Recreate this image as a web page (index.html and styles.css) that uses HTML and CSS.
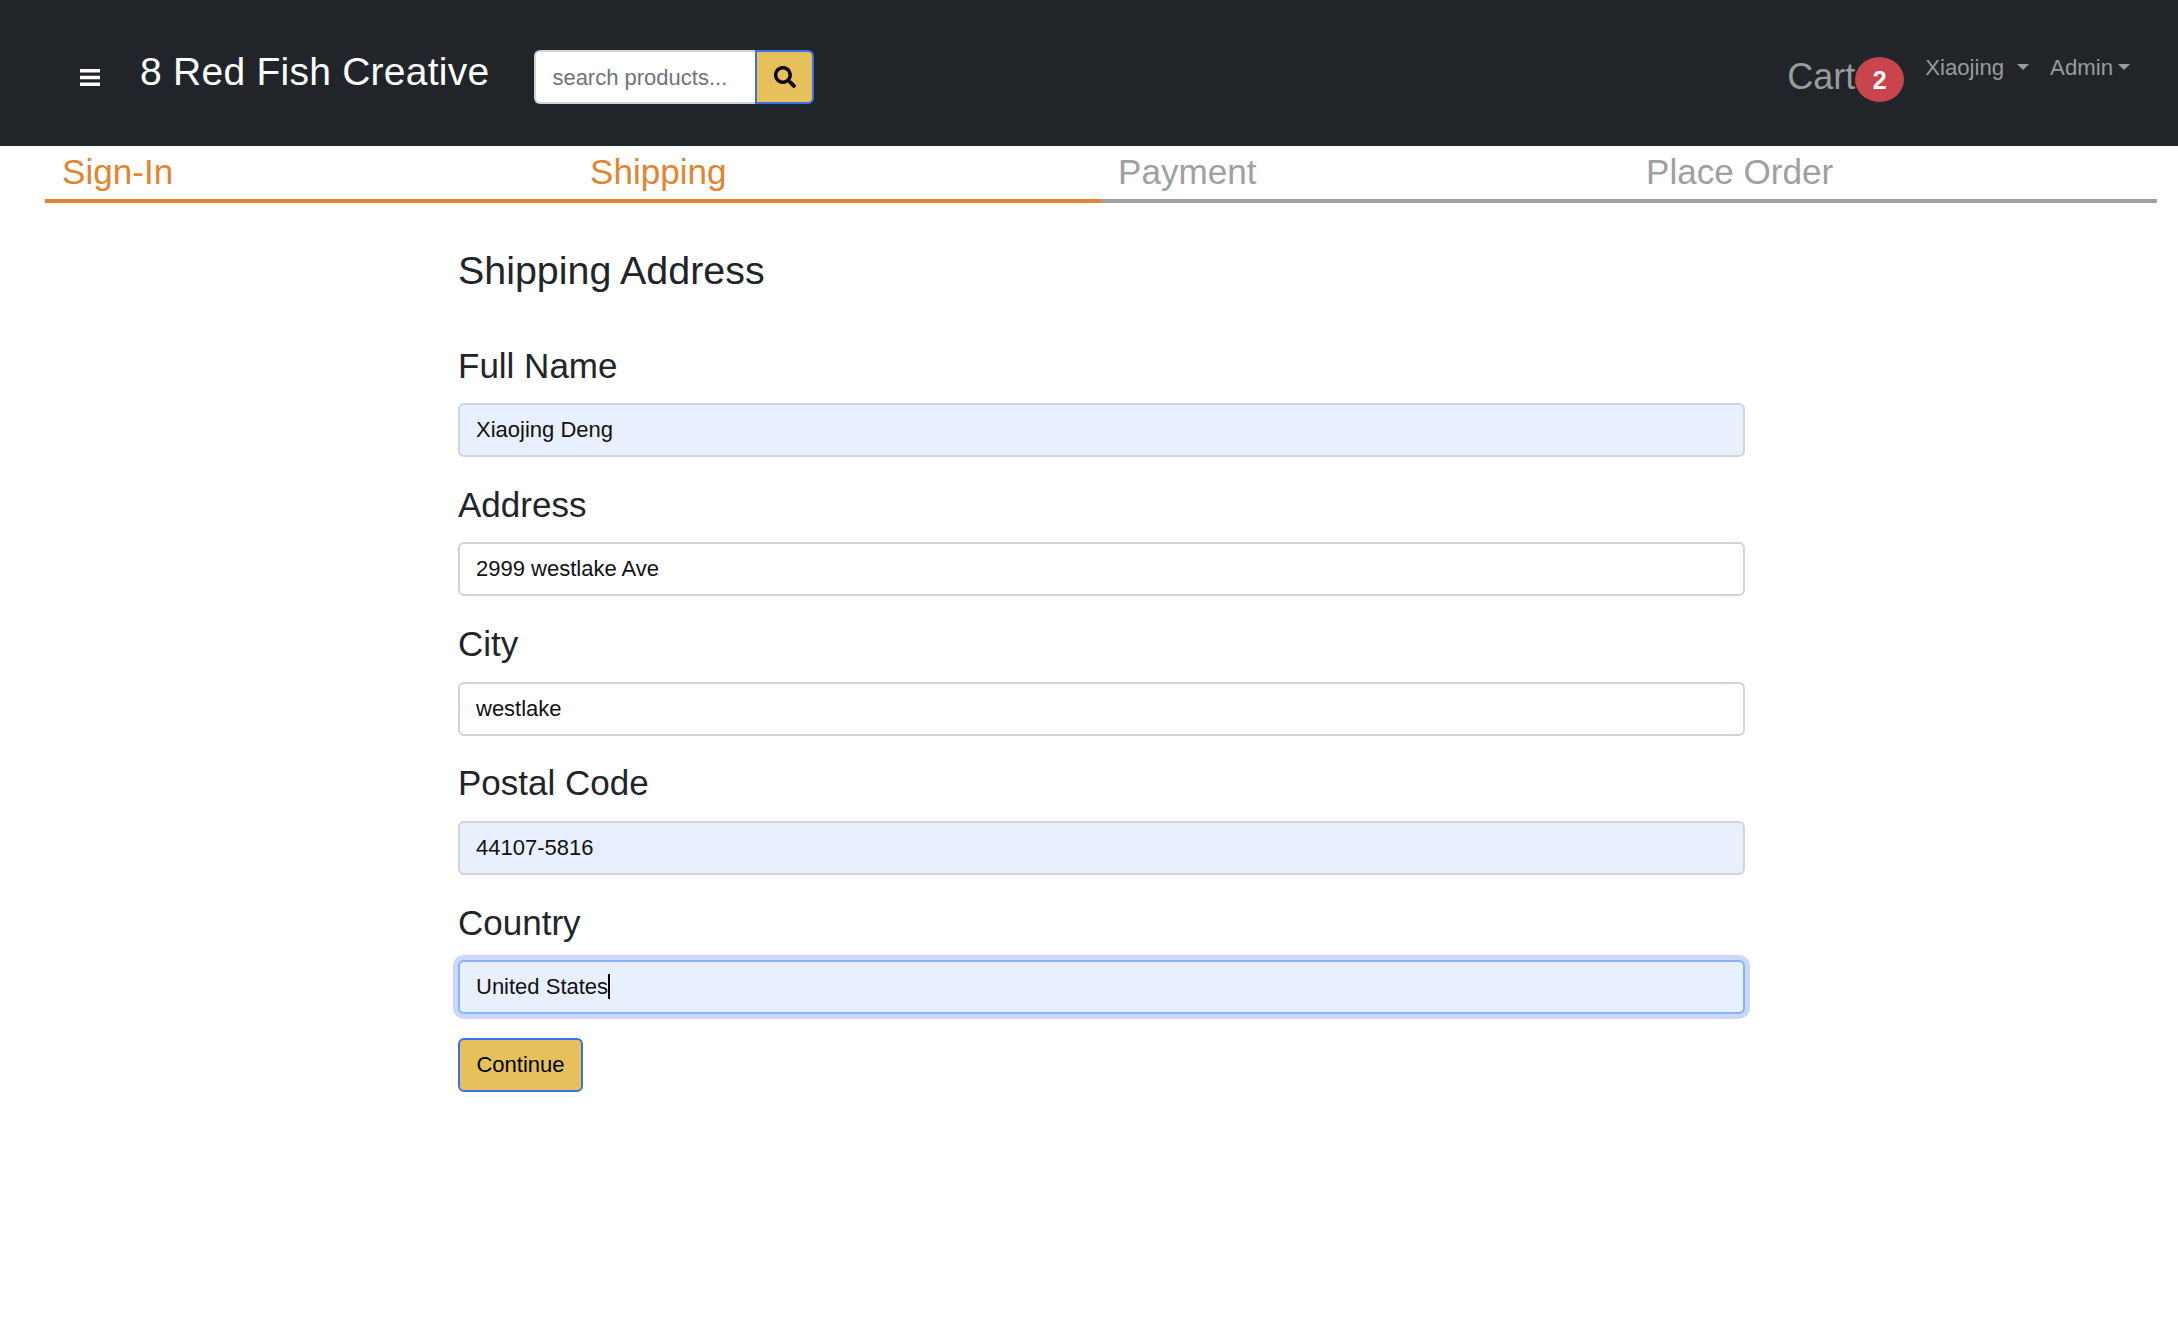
FILE: index.html
```html
<!DOCTYPE html>
<html lang="en">
<head>
  <meta charset="UTF-8">
  <meta name="viewport" content="width=device-width, initial-scale=1.0">
  <title>Shipping Address</title>
  <link rel="stylesheet" href="styles.css">
</head>
<body>
  <!-- top bar -->
  <header class="navbar">
    <div class="nav-left">
      <button class="menu-btn" type="button" aria-label="menu">
        <svg viewBox="0 0 20 17" width="20" height="17"><path d="M0 0h20v3.400H0zM0 6.800h20v3.400H0zM0 13.600h20V17H0z" fill="#fff"/></svg>
      </button>
      <a class="brand" href="#">8 Red Fish Creative</a>
      <form class="search">
        <input class="search-input" type="text" placeholder="search products...">
        <button class="search-btn" type="button" aria-label="search">
          <svg viewBox="0 0 512 512" width="22" height="22"><path d="M505 442.700L405.300 343c-4.500-4.500-10.600-7-17-7H372c27.600-35.300 44-79.700 44-128C416 93.100 322.900 0 208 0S0 93.100 0 208s93.100 208 208 208c48.300 0 92.700-16.400 128-44v16.300c0 6.400 2.500 12.500 7 17l99.700 99.700c9.400 9.400 24.600 9.400 33.900 0l28.300-28.300c9.400-9.400 9.400-24.600.1-34zM208 336c-70.700 0-128-57.200-128-128 0-70.700 57.200-128 128-128 70.700 0 128 57.200 128 128 0 70.700-57.200 128-128 128z" fill="#000"/></svg>
        </button>
      </form>
    </div>
    <nav class="nav-right">
      <a class="cart" href="#">Cart<span class="badge">2</span></a>
      <a class="nav-link user-link" href="#">Xiaojing<span class="caret"></span></a>
      <a class="nav-link admin-link" href="#">Admin<span class="caret"></span></a>
    </nav>
  </header>

  <!-- checkout steps -->
  <div class="steps">
    <div class="step active">Sign-In</div>
    <div class="step active">Shipping</div>
    <div class="step">Payment</div>
    <div class="step">Place Order</div>
  </div>

  <main class="shipping">
    <h1 class="title">Shipping Address</h1>
    <form class="shipping-form">
      <div class="field">
        <label for="fullName">Full Name</label>
        <input id="fullName" class="filled" type="text" value="Xiaojing Deng">
      </div>
      <div class="field">
        <label for="address">Address</label>
        <input id="address" type="text" value="2999 westlake Ave">
      </div>
      <div class="field">
        <label for="city">City</label>
        <input id="city" type="text" value="westlake">
      </div>
      <div class="field">
        <label for="postalCode">Postal Code</label>
        <input id="postalCode" class="filled" type="text" value="44107-5816">
      </div>
      <div class="field field-last">
        <label for="country">Country</label>
        <div class="input-wrap">
          <input id="country" class="filled focused" type="text" value="United States">
          <span class="text-caret"></span>
        </div>
      </div>
      <button class="continue" type="button">Continue</button>
    </form>
  </main>
</body>
</html>
```

FILE: styles.css
```css
/* page */
* {
  box-sizing: border-box;
}
body {
  margin: 0;
  min-height: 1330px;
  background-color: #fff;
  color: #212529;
  font-family: "Liberation Sans", Arial, sans-serif;
  font-size: 22px;
}
a {
  text-decoration: none;
}

/* top bar */
.navbar {
  display: flex;
  justify-content: space-between;
  height: 146px;
  padding: 0 47px 0 80px;
  background-color: #212529;
}
.nav-left {
  display: flex;
  align-items: center;
}
.menu-btn {
  display: flex;
  padding: 0;
  margin-top: 8px;
  border: 0;
  background: none;
}
.brand {
  margin-left: 40px;
  margin-top: -2px;
  color: #fff;
  font-size: 39px;
  letter-spacing: 0.25px;
}
.search {
  display: flex;
  height: 54px;
  margin-left: 45px;
  margin-top: 7px;
}
.search-input {
  width: 221px;
  padding: 2px 16px 0;
  border: 2px solid #ced4da;
  border-right: 0;
  border-radius: 6px 0 0 6px;
  background-color: #fff;
  font: 22px "Liberation Sans", Arial, sans-serif;
  outline: none;
}
.search-input::placeholder {
  color: #6c757d;
}
.search-btn {
  display: flex;
  align-items: center;
  justify-content: center;
  width: 59px;
  padding: 0;
  border: 2px solid #3b71e8;
  border-radius: 0 6px 6px 0;
  background-color: #e6c05a;
}
.nav-right {
  display: flex;
  align-items: flex-start;
}
.cart {
  display: flex;
  margin-top: 57px;
  color: #9a9b9d;
  font-size: 36px;
  line-height: 40px;
}
.badge {
  width: 49px;
  height: 45px;
  border-radius: 50%;
  background-color: #c9444d;
  color: #fff;
  font-size: 25px;
  font-weight: bold;
  line-height: 46px;
  text-align: center;
}
.nav-link {
  display: flex;
  align-items: center;
  margin-top: 55px;
  color: #9a9b9d;
  font-size: 22.2px;
  line-height: 26px;
}
.user-link {
  margin-left: 21px;
}
.admin-link {
  margin-left: 21px;
}
.caret {
  width: 0;
  height: 0;
  margin-left: 13px;
  margin-top: -2px;
  border-top: 6px solid #9a9b9d;
  border-left: 6px solid transparent;
  border-right: 6px solid transparent;
}
.admin-link .caret {
  margin-left: 5px;
  margin-right: 1px;
}

/* checkout steps */
.steps {
  display: grid;
  grid-template-columns: repeat(4, 1fr);
  margin: 0 21px 0 45px;
}
.step {
  height: 57px;
  padding-left: 17px;
  border-bottom: 4px solid #a0a0a0;
  color: #a0a0a0;
  font-size: 35.1px;
  line-height: 52px;
}
.step.active {
  border-bottom-color: #e08530;
  color: #e08530;
}

/* form */
.shipping {
  width: 1287px;
  margin-left: 458px;
}
.title {
  margin: 44px 0 0;
  font-size: 39.4px;
  font-weight: normal;
  line-height: 47px;
}
.shipping-form {
  margin-top: 51.5px;
}
.field {
  margin-bottom: 27.75px;
}
.field-last {
  margin-bottom: 23.5px;
}
.field label {
  display: block;
  margin-bottom: 17.5px;
  font-size: 35px;
  line-height: 40px;
}
.field input {
  display: block;
  width: 100%;
  height: 54px;
  padding: 0 16px;
  border: 2px solid #ced4da;
  border-radius: 6px;
  background-color: #fff;
  color: #111;
  font: 22px "Liberation Sans", Arial, sans-serif;
  outline: none;
}
.field input.filled {
  background-color: #e8f0fd;
}
.field input.focused {
  border-color: #8ab2fa;
  box-shadow: 0 0 0 5px #c9d8fb;
}
.input-wrap {
  position: relative;
}
.text-caret {
  position: absolute;
  left: 150px;
  top: 14px;
  width: 2px;
  height: 25px;
  background-color: #000;
}
.continue {
  display: block;
  width: 125px;
  height: 54px;
  padding: 0;
  border: 2px solid #3b71e8;
  border-radius: 6px;
  background-color: #e6c05a;
  color: #000;
  font: 22px "Liberation Sans", Arial, sans-serif;
}
```
